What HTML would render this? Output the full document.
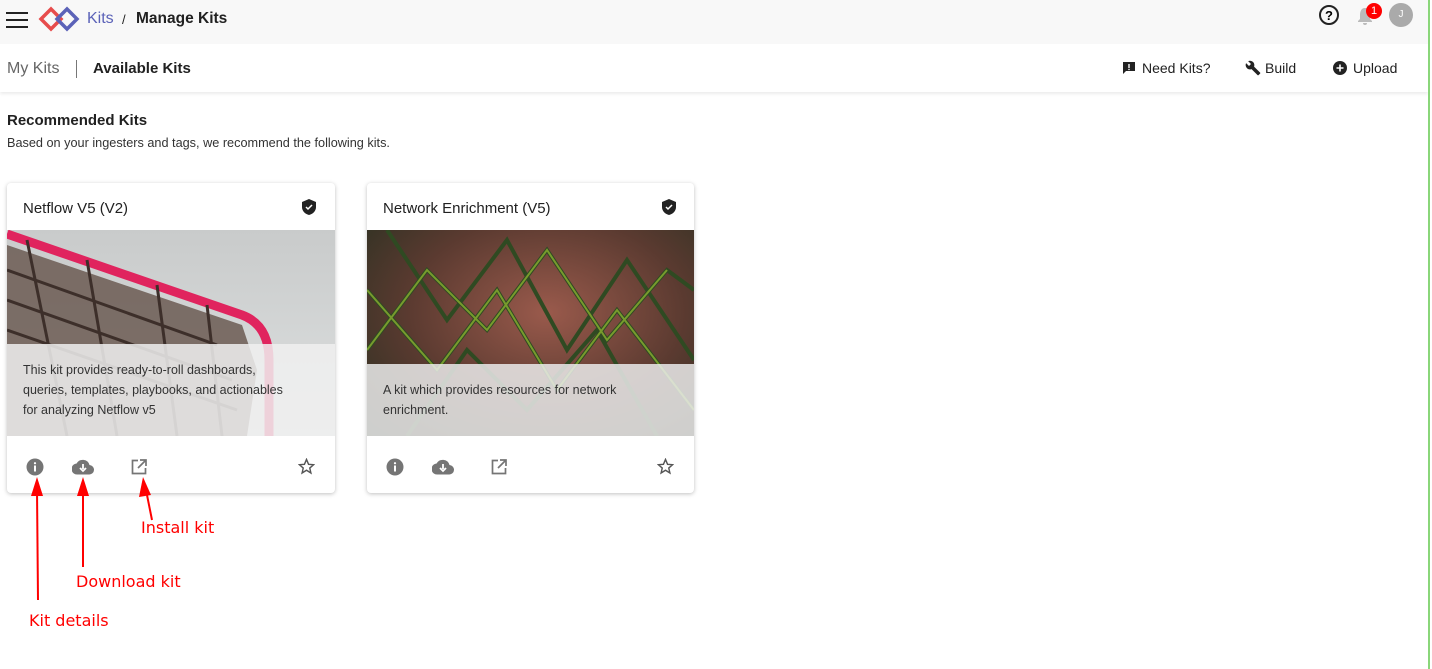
<!DOCTYPE html>
<html><head><meta charset="utf-8"><style>
*{box-sizing:border-box;margin:0;padding:0}
body{width:1432px;height:669px;overflow:hidden;background:#fff;font-family:"Liberation Sans",sans-serif;color:#212121;position:relative}
.top{position:absolute;left:0;top:0;width:1428px;height:44px;background:#f8f8f8}
.sub{position:absolute;left:0;top:44px;width:1428px;height:48px;background:#fff;box-shadow:0 2px 3px rgba(0,0,0,.08)}
.abs{position:absolute;white-space:nowrap}
.card{position:absolute;top:183px;height:310px;background:#fff;border-radius:4px;box-shadow:0 1px 4px rgba(0,0,0,.25);overflow:hidden}
.card h3{position:absolute;left:16px;top:17px;font-size:15px;font-weight:normal;color:#212121}
.img{position:absolute;left:0;top:47px;width:100%;height:206px;overflow:hidden}
.ov{position:absolute;left:0;right:0;bottom:0;background:rgba(240,240,240,.85);font-size:12.5px;line-height:20px;padding:16px 10px 16px 16px;color:#333;white-space:nowrap}
.red{color:#f00;font-size:16px;position:absolute;font-family:"DejaVu Sans",sans-serif}
</style></head><body>
<div class="top">
 <div class="abs" style="left:6px;top:12px;width:22px;height:16px;border-top:2px solid #222;border-bottom:2px solid #222"><div style="margin-top:5px;height:2px;background:#222"></div></div>
 <svg class="abs" style="left:38px;top:6px" width="42" height="26" viewBox="0 0 42 26"><path d="M3 13L13 3L23 13L13 23Z" fill="none" stroke="#e74c4c" stroke-width="3.5"/><path d="M19 13L29 3L39 13L29 23Z" fill="none" stroke="#5b62b8" stroke-width="3.5"/></svg>
 <div class="abs" style="left:87px;top:10px;font-size:16px;color:#5b62b8">Kits</div>
 <div class="abs" style="left:122px;top:12px;font-size:13px">/</div>
 <div class="abs" style="left:136px;top:10px;font-size:15.5px;font-weight:bold">Manage Kits</div>
 <svg class="abs" style="left:1318px;top:4px" width="22" height="22" viewBox="0 0 22 22"><circle cx="11" cy="11" r="9" fill="none" stroke="#222" stroke-width="2"/><text x="11" y="16" text-anchor="middle" font-size="13" font-weight="bold" font-family="Liberation Sans">?</text></svg>
 <svg class="abs" style="left:1356px;top:6px" width="18" height="20" viewBox="0 0 18 20"><path d="M9 2C5 2 4 6 4 9v4l-2 2v1h14v-1l-2-2V9c0-3-1-7-5-7zM7 17h4a2 2 0 0 1-4 0z" fill="#bbb"/></svg>
 <div class="abs" style="left:1366px;top:3px;width:16px;height:16px;border-radius:8px;background:#f00;color:#fff;font-size:11px;text-align:center;line-height:16px">1</div>
 <div class="abs" style="left:1389px;top:3px;width:24px;height:24px;border-radius:12px;background:#aaa;color:#fff;font-size:10px;text-align:center;line-height:24px">J</div>
</div>
<div class="sub">
 <div class="abs" style="left:7px;top:16px;font-size:16px;color:#666">My Kits</div>
 <div class="abs" style="left:76px;top:16px;width:1px;height:18px;background:#777"></div>
 <div class="abs" style="left:93px;top:16px;font-size:15px;font-weight:bold">Available Kits</div>
 <svg class="abs" style="left:1122px;top:17px" width="14" height="14" viewBox="0 0 14 14"><path d="M1 1h12v9H4l-3 3z" fill="#222"/><rect x="6.3" y="3" width="1.4" height="4" fill="#fff"/><rect x="6.3" y="7.8" width="1.4" height="1.3" fill="#fff"/></svg>
 <div class="abs" style="left:1142px;top:16px;font-size:14px">Need Kits?</div>
 <svg class="abs" style="left:1245px;top:16px" width="16" height="16" viewBox="0 0 24 24"><path d="M22.7 19l-9.1-9.1c.9-2.3.4-5-1.5-6.9-2-2-5-2.4-7.4-1.3L9 6 6 9 1.6 4.7C.4 7.1.9 10.1 2.9 12.1c1.9 1.9 4.6 2.4 6.9 1.5l9.1 9.1c.4.4 1 .4 1.4 0l2.3-2.3c.5-.4.5-1.1.1-1.4z" fill="#222"/></svg>
 <div class="abs" style="left:1265px;top:16px;font-size:14px">Build</div>
 <svg class="abs" style="left:1333px;top:17px" width="14" height="14" viewBox="0 0 14 14"><circle cx="7" cy="7" r="7" fill="#222"/><path d="M7 3.5v7M3.5 7h7" stroke="#fff" stroke-width="1.6"/></svg>
 <div class="abs" style="left:1353px;top:16px;font-size:14px">Upload</div>
</div>
<div class="abs" style="left:1428px;top:0;width:2px;height:669px;background:#8ad67a"></div>
<div class="abs" style="left:7px;top:112px;font-size:15px;font-weight:bold">Recommended Kits</div>
<div class="abs" style="left:7px;top:136px;font-size:12.7px;color:#333">Based on your ingesters and tags, we recommend the following kits.</div>

<div class="card" style="left:7px;width:328px">
 <h3>Netflow V5 (V2)</h3>
 <svg class="abs" style="left:295px;top:16px" width="14" height="16" viewBox="0 0 14 16"><path d="M7 0L0 3v5c0 4 3 7 7 8 4-1 7-4 7-8V3z" fill="#222"/><path d="M4 8l2 2 4-4" stroke="#fff" stroke-width="1.5" fill="none"/></svg>
 <div class="img" style="background:linear-gradient(180deg,#c9cbcb,#dde0e0)">
  <svg width="328" height="206" viewBox="0 0 328 206"><path d="M0 15L235 95L250 140L240 206L0 206Z" fill="#6b5a52" opacity=".85"/><path d="M0 4L235 85Q262 95 262 130V206" stroke="#e0245e" stroke-width="9" fill="none"/><path d="M0 40L210 115M0 70L225 150M0 100L230 180M20 10L60 206M80 30L110 206M150 55L170 206M200 75L215 206" stroke="#3d2f2a" stroke-width="3"/></svg>
  <div class="ov" style="top:114px">This kit provides ready-to-roll dashboards,<br>queries, templates, playbooks, and actionables<br>for analyzing Netflow v5</div>
 </div>
 <svg class="abs" style="left:19px;top:275px" width="18" height="18" viewBox="0 0 18 18"><circle cx="9" cy="9" r="8.5" fill="#757575"/><rect x="8" y="7.5" width="2" height="6" fill="#fff"/><circle cx="9" cy="5.2" r="1.1" fill="#fff"/></svg>
 <svg class="abs" style="left:65px;top:276px" width="22" height="16" viewBox="0 0 22 16"><path d="M17.5 6A7 7 0 0 0 4.6 4.5 5.5 5.5 0 0 0 5.5 15.5h11.5a4.7 4.7 0 0 0 .5-9.5z" fill="#757575"/><path d="M11 5v5M8 9l3 3 3-3" stroke="#fff" stroke-width="1.8" fill="none"/></svg>
 <svg class="abs" style="left:124px;top:276px" width="16" height="16" viewBox="0 0 16 16"><path d="M7 1.5H1.5v13h13V9" stroke="#757575" stroke-width="1.7" fill="none"/><path d="M9 1h6v6M15 1L7 9" stroke="#757575" stroke-width="1.7" fill="none"/></svg>
 <svg class="abs" style="left:291px;top:275px" width="17" height="17" viewBox="0 0 24 24"><path d="M12 2l2.9 6.9 7.1.6-5.4 4.7 1.6 7L12 17.3 5.8 21.2l1.6-7L2 9.5l7.1-.6z" fill="none" stroke="#555" stroke-width="2"/></svg>
</div>

<div class="card" style="left:367px;width:327px">
 <h3>Network Enrichment (V5)</h3>
 <svg class="abs" style="left:295px;top:16px" width="14" height="16" viewBox="0 0 14 16"><path d="M7 0L0 3v5c0 4 3 7 7 8 4-1 7-4 7-8V3z" fill="#222"/><path d="M4 8l2 2 4-4" stroke="#fff" stroke-width="1.5" fill="none"/></svg>
 <div class="img" style="background:radial-gradient(ellipse at 55% 40%,#9a5a4c,#5a3a30 55%,#263020)">
  <svg width="327" height="206" viewBox="0 0 327 206"><g stroke="#2f4a22" stroke-width="4" fill="none"><path d="M0 120L60 40L120 100L180 20L240 110L300 40L327 60"/><path d="M20 0L80 90L140 10L200 120L260 30L327 130"/><path d="M0 60L70 140L130 60L190 160L250 80L327 180"/><path d="M40 206L100 120L160 180L230 100L290 206"/></g><g stroke="#8ab030" stroke-width="2" fill="none" opacity=".8"><path d="M0 120L60 40L120 100L180 20L240 110L300 40"/><path d="M0 60L70 140L130 60L190 160L250 80L327 180"/></g></svg>
  <div class="ov" style="top:134px;background:rgba(235,235,235,.85)">A kit which provides resources for network<br>enrichment.</div>
 </div>
 <svg class="abs" style="left:19px;top:275px" width="18" height="18" viewBox="0 0 18 18"><circle cx="9" cy="9" r="8.5" fill="#757575"/><rect x="8" y="7.5" width="2" height="6" fill="#fff"/><circle cx="9" cy="5.2" r="1.1" fill="#fff"/></svg>
 <svg class="abs" style="left:65px;top:276px" width="22" height="16" viewBox="0 0 22 16"><path d="M17.5 6A7 7 0 0 0 4.6 4.5 5.5 5.5 0 0 0 5.5 15.5h11.5a4.7 4.7 0 0 0 .5-9.5z" fill="#757575"/><path d="M11 5v5M8 9l3 3 3-3" stroke="#fff" stroke-width="1.8" fill="none"/></svg>
 <svg class="abs" style="left:124px;top:276px" width="16" height="16" viewBox="0 0 16 16"><path d="M7 1.5H1.5v13h13V9" stroke="#757575" stroke-width="1.7" fill="none"/><path d="M9 1h6v6M15 1L7 9" stroke="#757575" stroke-width="1.7" fill="none"/></svg>
 <svg class="abs" style="left:290px;top:275px" width="17" height="17" viewBox="0 0 24 24"><path d="M12 2l2.9 6.9 7.1.6-5.4 4.7 1.6 7L12 17.3 5.8 21.2l1.6-7L2 9.5l7.1-.6z" fill="none" stroke="#555" stroke-width="2"/></svg>
</div>

<svg class="abs" style="left:0;top:470px" width="200" height="140"><g fill="#f00" stroke="#f00" stroke-width="2"><line x1="37" y1="20" x2="38" y2="130"/><line x1="83" y1="20" x2="83" y2="97"/><line x1="146" y1="20" x2="152" y2="50"/></g><g fill="#f00"><path d="M37 7L31 26H43Z"/><path d="M83 7L77 26H89Z"/><path d="M143 7L139 27L151 25Z"/></g></svg>
<div class="red" style="left:141px;top:518px">Install kit</div>
<div class="red" style="left:76px;top:572px">Download kit</div>
<div class="red" style="left:29px;top:611px">Kit details</div>
</body></html>
